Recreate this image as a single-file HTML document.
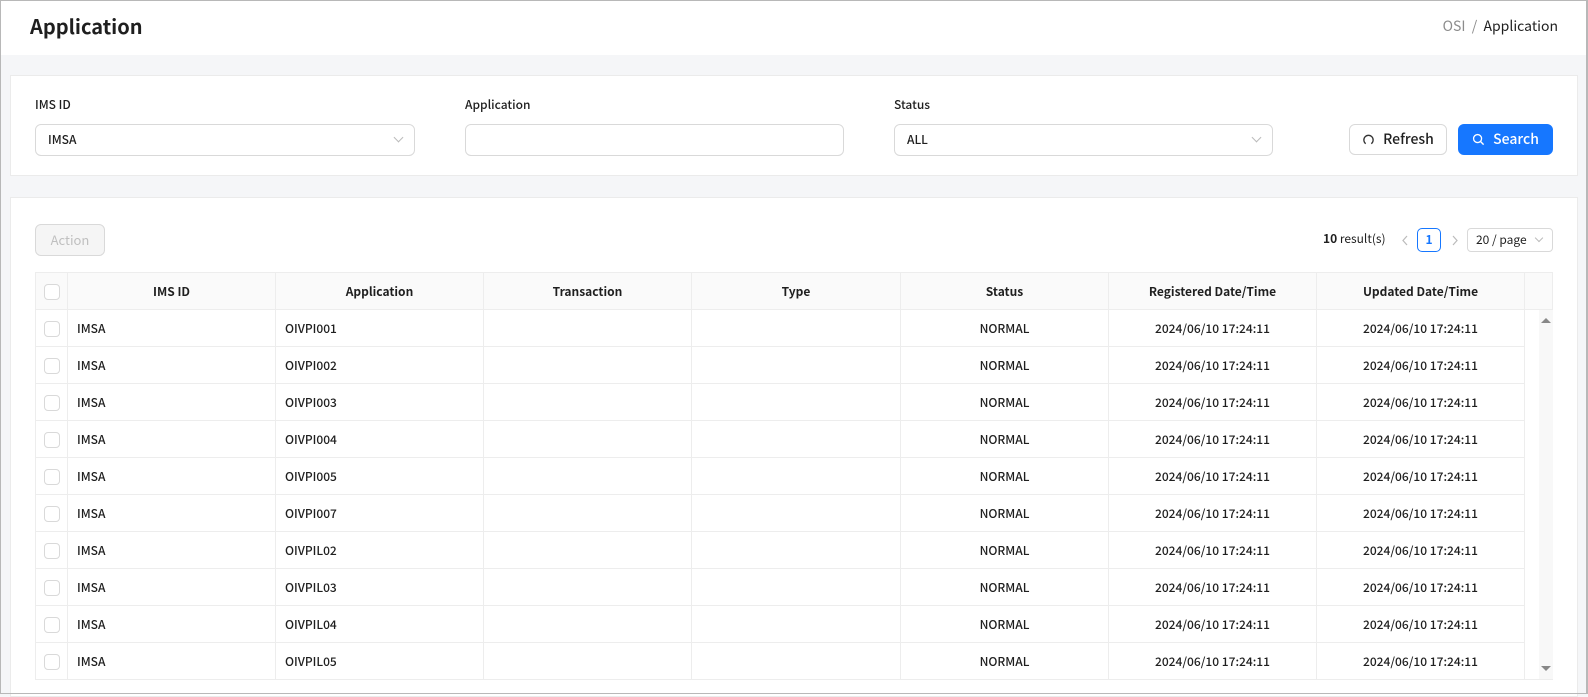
<!DOCTYPE html>
<html><head><meta charset="utf-8"><style>
*{box-sizing:border-box;margin:0;padding:0}
body{width:1588px;height:694px;overflow:hidden;background:#f5f6f8;font-family:"Noto Sans CJK KR","Liberation Sans",sans-serif;color:#1f1f1f;position:relative}
.frame{position:absolute;left:0;top:0;width:1588px;height:694px;border:1px solid #b8b8b8;border-right-width:2px;pointer-events:none;z-index:10}
.hdr{position:absolute;left:0;top:0;width:1588px;height:55px;background:#fff}
.title{position:absolute;left:30px;top:11px;font-size:20px;font-weight:700;line-height:30px}
.bc{position:absolute;right:30px;top:15px;font-size:14px;line-height:22px;color:#8c8c8c}
.bc b{font-weight:400;color:#1f1f1f}
.panel{position:absolute;background:#fff;border:1px solid #ebebeb}
.lbl{position:absolute;top:96px;font-size:12px;font-weight:500;line-height:18px}
.inp{position:absolute;top:124px;height:32px;width:380px;border:1px solid #d9d9d9;border-radius:6px;background:#fff;font-size:12px;font-weight:500;line-height:30px;padding-left:12px}
.inp .ar{position:absolute;right:12px;top:9px;width:7px;height:7px;border-right:1px solid #bbb;border-bottom:1px solid #bbb;transform:rotate(45deg)}
.btn{position:absolute;top:124px;height:31px;border-radius:6px;font-size:14px;font-weight:500;line-height:29px;text-align:center}
table{position:absolute;left:35px;top:272px;border-collapse:collapse;font-size:12px;font-weight:500;table-layout:fixed}
td,th{border:1px solid #ededed;height:37px;padding:0}
th{background:#fafafa;font-weight:700;text-align:center}
td{text-align:center}
td.l{text-align:left;padding-left:9px}
.cb{display:inline-block;width:16px;height:16px;border:1px solid #d9d9d9;border-radius:4px;background:#fff;vertical-align:middle}
</style></head><body>
<div class="hdr"><div class="title">Application</div>
<div class="bc">OSI &nbsp;/ &nbsp;<b>Application</b></div></div>

<div class="panel" style="left:10px;top:75px;width:1568px;height:101px"></div>
<div class="lbl" style="left:35px">IMS ID</div>
<div class="lbl" style="left:465px">Application</div>
<div class="lbl" style="left:894px">Status</div>
<div class="inp" style="left:35px">IMSA<span class="ar"></span></div>
<div class="inp" style="left:465px;width:379px"></div>
<div class="inp" style="left:894px;width:379px">ALL<span class="ar"></span></div>
<div class="btn" style="left:1349px;width:98px;border:1px solid #d9d9d9;background:#fff">
<svg width="13" height="13" viewBox="0 0 14 14" style="vertical-align:-2px;margin-right:8px"><path d="M4 11.5A5 5 0 1 1 10 11.5" fill="none" stroke="#333" stroke-width="1.4"/></svg>Refresh</div>
<div class="btn" style="left:1458px;width:95px;background:#1677ff;color:#fff;border:1px solid #1677ff">
<svg width="13" height="13" viewBox="0 0 14 14" style="vertical-align:-2px;margin-right:8px"><circle cx="6" cy="6" r="4.3" fill="none" stroke="#fff" stroke-width="1.4"/><path d="M9.2 9.2L12.5 12.5" stroke="#fff" stroke-width="1.5"/></svg>Search</div>

<div class="panel" style="left:10px;top:197px;width:1568px;height:500px"></div>
<div class="btn" style="left:35px;top:224px;width:70px;height:32px;background:#f5f5f5;border:1px solid #d9d9d9;color:#bfbfbf;font-size:13px;font-weight:400;line-height:30px">Action</div>
<div style="position:absolute;left:1323px;top:230px;font-size:12px;line-height:18px"><b>10</b> result(s)</div>
<svg style="position:absolute;left:1401px;top:235px" width="8" height="11" viewBox="0 0 8 11"><path d="M6 1L2 5.5 6 10" fill="none" stroke="#bbb" stroke-width="1.2"/></svg>
<div style="position:absolute;left:1417px;top:228px;width:24px;height:24px;border:1px solid #1677ff;border-radius:5px;color:#1677ff;font-size:12px;font-weight:700;text-align:center;line-height:22px">1</div>
<svg style="position:absolute;left:1451px;top:235px" width="8" height="11" viewBox="0 0 8 11"><path d="M2 1L6 5.5 2 10" fill="none" stroke="#bbb" stroke-width="1.2"/></svg>
<div style="position:absolute;left:1467px;top:228px;width:86px;height:24px;border:1px solid #d9d9d9;border-radius:4px;font-size:12px;line-height:22px;padding-left:8px">20 / page<span style="position:absolute;right:10px;top:6px;width:6px;height:6px;border-right:1px solid #bbb;border-bottom:1px solid #bbb;transform:rotate(45deg)"></span></div>

<table>
<colgroup><col style="width:32px"><col style="width:208px"><col style="width:208px"><col style="width:208px"><col style="width:209px"><col style="width:208px"><col style="width:208px"><col style="width:208px"><col style="width:28px"></colgroup>
<tr><th><span class="cb"></span></th><th>IMS ID</th><th>Application</th><th>Transaction</th><th>Type</th><th>Status</th><th>Registered Date/Time</th><th>Updated Date/Time</th><th></th></tr>
<tr><td><span class="cb"></span></td><td class="l">IMSA</td><td class="l">OIVPI001</td><td></td><td></td><td>NORMAL</td><td>2024/06/10 17:24:11</td><td>2024/06/10 17:24:11</td><td rowspan="10" style="background:#fff;border-right:none;position:relative"><div style="position:absolute;right:0;top:0;width:14px;height:100%;background:#f8f8f8"></div><div style="position:absolute;right:2px;top:8px;border:5px solid transparent;border-bottom:5px solid #888;border-top:none"></div><div style="position:absolute;right:2px;bottom:8px;border:5px solid transparent;border-top:5px solid #888;border-bottom:none"></div></td></tr>
<tr><td><span class="cb"></span></td><td class="l">IMSA</td><td class="l">OIVPI002</td><td></td><td></td><td>NORMAL</td><td>2024/06/10 17:24:11</td><td>2024/06/10 17:24:11</td></tr>
<tr><td><span class="cb"></span></td><td class="l">IMSA</td><td class="l">OIVPI003</td><td></td><td></td><td>NORMAL</td><td>2024/06/10 17:24:11</td><td>2024/06/10 17:24:11</td></tr>
<tr><td><span class="cb"></span></td><td class="l">IMSA</td><td class="l">OIVPI004</td><td></td><td></td><td>NORMAL</td><td>2024/06/10 17:24:11</td><td>2024/06/10 17:24:11</td></tr>
<tr><td><span class="cb"></span></td><td class="l">IMSA</td><td class="l">OIVPI005</td><td></td><td></td><td>NORMAL</td><td>2024/06/10 17:24:11</td><td>2024/06/10 17:24:11</td></tr>
<tr><td><span class="cb"></span></td><td class="l">IMSA</td><td class="l">OIVPI007</td><td></td><td></td><td>NORMAL</td><td>2024/06/10 17:24:11</td><td>2024/06/10 17:24:11</td></tr>
<tr><td><span class="cb"></span></td><td class="l">IMSA</td><td class="l">OIVPIL02</td><td></td><td></td><td>NORMAL</td><td>2024/06/10 17:24:11</td><td>2024/06/10 17:24:11</td></tr>
<tr><td><span class="cb"></span></td><td class="l">IMSA</td><td class="l">OIVPIL03</td><td></td><td></td><td>NORMAL</td><td>2024/06/10 17:24:11</td><td>2024/06/10 17:24:11</td></tr>
<tr><td><span class="cb"></span></td><td class="l">IMSA</td><td class="l">OIVPIL04</td><td></td><td></td><td>NORMAL</td><td>2024/06/10 17:24:11</td><td>2024/06/10 17:24:11</td></tr>
<tr><td><span class="cb"></span></td><td class="l">IMSA</td><td class="l">OIVPIL05</td><td></td><td></td><td>NORMAL</td><td>2024/06/10 17:24:11</td><td>2024/06/10 17:24:11</td></tr>
</table>
<div class="frame"></div>
</body></html>
